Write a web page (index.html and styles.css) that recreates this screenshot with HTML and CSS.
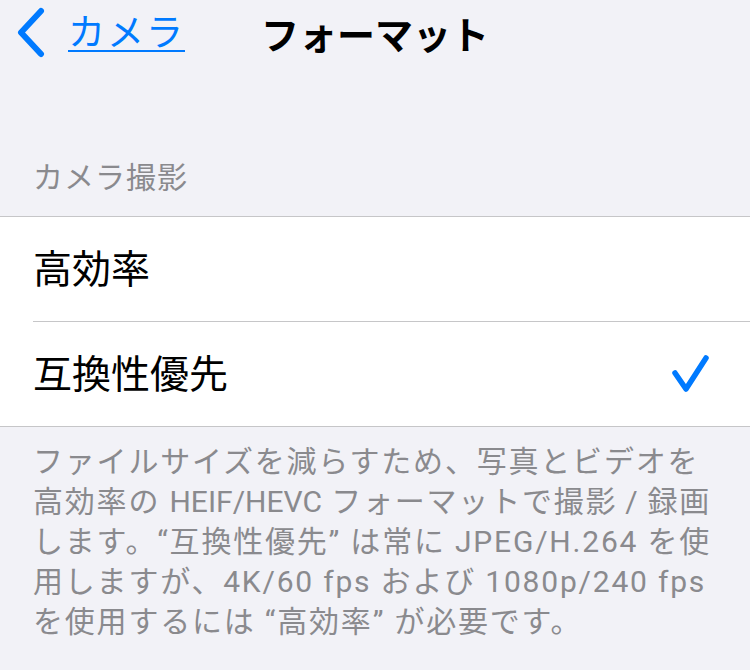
FILE: index.html
```html
<!DOCTYPE html>
<html lang="ja">
<head>
    <meta charset="UTF-8">
    <meta name="viewport" content="width=device-width, initial-scale=1.0">
    <title>フォーマット</title>
    <link rel="stylesheet" href="styles.css">
</head>
<body>
    <nav class="nav-bar">
        <div class="nav-left">
            <svg class="back-chevron" width="32" height="52" viewBox="0 0 32 52">
                <path d="M27 4 L7 25.5 L27 47" fill="none" stroke="#007aff" stroke-width="6" stroke-linecap="round" stroke-linejoin="round"/>
            </svg>
            <a href="#" class="back-link">カメラ</a>
        </div>
        <h1 class="nav-title">フォーマット</h1>
        <div class="nav-right"></div>
    </nav>

    <h2 class="section-header">カメラ撮影</h2>

    <div class="group">
        <div class="cell">
            <div class="cell-content">
                <span class="cell-label">高効率</span>
            </div>
        </div>
        <div class="cell">
            <div class="cell-content">
                <span class="cell-label">互換性優先</span>
                <svg class="checkmark" width="44" height="44" viewBox="0 0 44 44">
                    <path d="M7 21 L18 37 L38 6" fill="none" stroke="#007aff" stroke-width="5.5" stroke-linecap="round" stroke-linejoin="round"/>
                </svg>
            </div>
        </div>
    </div>

    <p class="section-footer">
        ファイルサイズを減らすため、写真とビデオを<br>
        高効率の <span class="tight">HEIF/HEVC</span> フォーマットで撮影&thinsp;/&thinsp;録画<br>
        します。“互換性優先” は常に JPEG/H.264 を使<br>
        用しますが、4K/60 fps および 1080p/240 fps<br>
        を使用するには “高効率” が必要です。
    </p>
</body>
</html>
```

FILE: styles.css
```css
body {
    margin: 0;
    padding: 0;
    background-color: #f2f2f7;
    font-family: Inter, "Noto Sans CJK JP", sans-serif;
    color: #000;
}

.nav-bar {
    display: grid;
    grid-template-columns: 1fr auto 1fr;
    align-items: center;
    height: 70px;
}

.nav-left {
    display: flex;
    align-items: center;
    padding-left: 14px;
    margin-top: -4px;
}

.back-chevron {
    display: block;
}

.back-link {
    margin-left: 22px;
    font-size: 37px;
    line-height: 44px;
    letter-spacing: 2px;
    color: #007aff;
    text-decoration: underline;
    text-decoration-thickness: 2px;
    text-underline-offset: 4px;
}

.nav-title {
    margin: 0;
    font-size: 38px;
    line-height: 44px;
    font-weight: 700;
}

.section-header {
    margin: 87px 0 0;
    padding: 0 33px 19px;
    font-size: 30px;
    line-height: 40px;
    font-weight: 400;
    letter-spacing: 1px;
    color: #8a8a8e;
}

.group {
    background-color: #fff;
    border-top: 1px solid #c6c6c8;
    border-bottom: 1px solid #c6c6c8;
}

.cell {
    padding-left: 33px;
}

.cell-content {
    display: flex;
    align-items: center;
    justify-content: space-between;
    height: 104px;
    padding-right: 38px;
    border-bottom: 1px solid #c6c6c8;
}

.cell:last-child .cell-content {
    border-bottom: none;
}

.cell-label {
    font-size: 39px;
    line-height: 44px;
}

.checkmark {
    display: block;
}

.section-footer {
    margin: 0;
    padding: 15px 33px 0;
    font-family: Roboto, "Noto Sans CJK JP", sans-serif;
    font-size: 30px;
    line-height: 40px;
    letter-spacing: 1.8px;
    white-space: nowrap;
    color: #8a8a8e;
}

.section-footer .tight {
    letter-spacing: 0;
}
```
